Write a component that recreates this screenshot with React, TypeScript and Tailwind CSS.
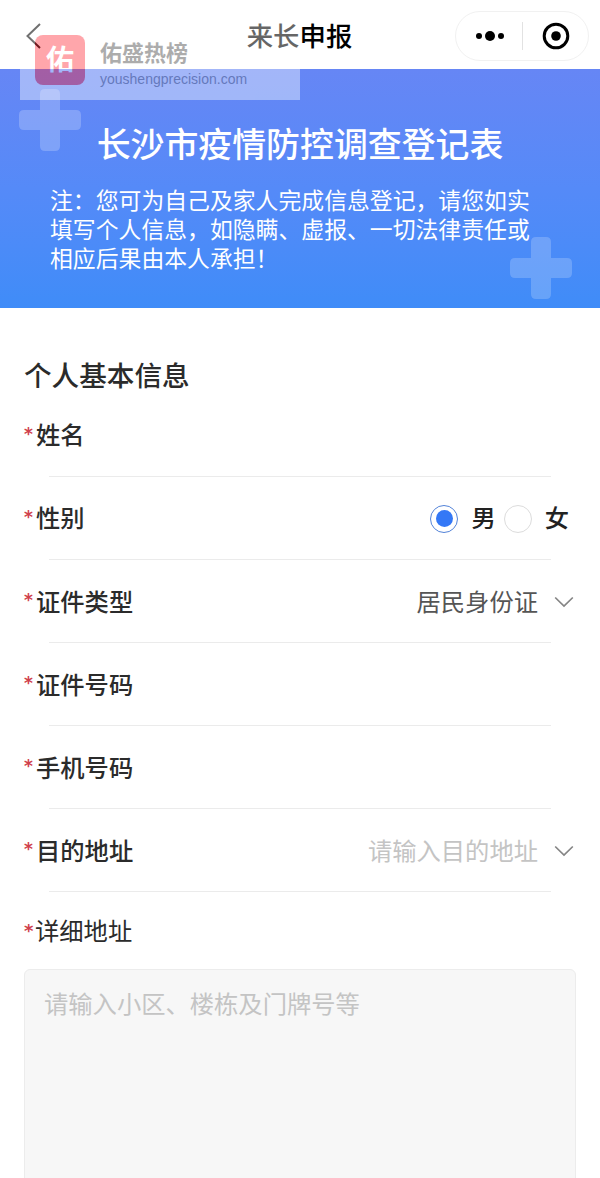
import { useState } from "react";
import type { ReactNode } from "react";

const genders = ["男", "女"];

function Plus({ className }: { className: string }) {
  return (
    <svg viewBox="0 0 62 62" className={`absolute size-[62px] ${className}`}>
      <path
        fill="currentColor"
        d="M26 0h10q5 0 5 5v16h16q5 0 5 5v10q0 5-5 5H41v16q0 5-5 5H26q-5 0-5-5V41H5q-5 0-5-5V26q0-5 5-5h16V5q0-5 5-5z"
      />
    </svg>
  );
}

function Chevron() {
  return (
    <svg viewBox="0 0 20 12" fill="none" className="mt-[3px] ml-4 h-3 w-5 text-[#858585]">
      <path d="M1.2 1.5 10 10l8.8-8.5" stroke="currentColor" strokeWidth="1.7" />
    </svg>
  );
}

interface FieldProps {
  label: string;
  children?: ReactNode;
}

function Field({ label, children }: FieldProps) {
  return (
    <div className="h-[83.1px]">
      <div className="flex h-[81px] items-center pr-[26px] pl-6">
        <span className="w-[12px] font-['DejaVu_Sans'] text-[17px] font-bold text-[#d0404c]">*</span>
        <span className="font-medium text-[#2b2b2b]">{label}</span>
        <div className="ml-auto flex items-center">{children}</div>
      </div>
      <div className="mt-px mr-[49px] ml-[49px] h-px bg-[#ebebeb]" />
    </div>
  );
}

function NavBar() {
  return (
    <header className="flex h-[69px] items-center bg-white pt-[2px]">
      <div className="w-[227px] pl-[25px]">
        <svg viewBox="0 0 17 28" fill="none" className="h-7 w-[17px]">
          <path d="M15 2 2.5 14 15 26" stroke="#111" strokeWidth="2" />
        </svg>
      </div>
      <h1 className="w-[145px] pb-px text-center text-[26.4px] font-medium text-black">来长申报</h1>
      <div className="ml-auto mr-[11px] flex h-[50px] w-[134px] items-center rounded-full border border-[#f1f1f1]">
        <div className="flex w-[66px] items-center justify-center gap-[3px] pl-[2px]">
          <span className="size-[6px] rounded-full bg-black" />
          <span className="size-[10px] rounded-full bg-black" />
          <span className="size-[6px] rounded-full bg-black" />
        </div>
        <div className="h-7 w-px bg-[#e2e2e2]" />
        <div className="flex flex-1 justify-center">
          <svg viewBox="0 0 28 28" className="size-7">
            <circle cx="14" cy="14" r="11.8" fill="none" stroke="#000" strokeWidth="3" />
            <circle cx="14" cy="14" r="4.8" />
          </svg>
        </div>
      </div>
    </header>
  );
}

function Banner() {
  return (
    <section className="relative h-[239px] bg-linear-to-b from-[#6686f5] via-[#558af8] to-[#3f8cf8] pt-[49px] text-white">
      <Plus className="top-[20px] left-[19px] text-white/22" />
      <Plus className="top-[168px] left-[510px] text-white/20" />
      <h2 className="text-center text-[33.9px] leading-[50px] font-medium">长沙市疫情防控调查登记表</h2>
      <p className="mt-[17px] ml-[50px] text-[22.85px] leading-[29.2px] whitespace-nowrap">
        注：您可为自己及家人完成信息登记，请您如实
        <br />
        填写个人信息，如隐瞒、虚报、一切法律责任或
        <br />
        相应后果由本人承担！
      </p>
    </section>
  );
}

// 左上角半透明站点标识
function SiteBadge() {
  return (
    <div className="absolute top-5 left-5 flex h-20 w-[280px] bg-white p-[15px] opacity-40">
      <div className="flex size-[50px] items-center justify-center rounded-[8px] bg-[#ff2430] pb-[4px] text-[28px] font-bold text-white">
        佑
      </div>
      <div className="ml-[15px]">
        <div className="text-[22px] leading-8 font-bold text-[#333]">佑盛热榜</div>
        <div className="mt-[3px] font-['Liberation_Sans'] text-[14px] leading-[18px] text-[#666]">
          youshengprecision.com
        </div>
      </div>
    </div>
  );
}

export default function App() {
  const [gender, setGender] = useState("男");

  return (
    <div className="relative h-[1178px] w-[600px] overflow-hidden bg-white font-['Noto_Sans_CJK_SC',sans-serif] text-[24.3px] leading-none">
      <NavBar />
      <Banner />

      <main>
        <h3 className="pt-[52px] pl-6 text-[27.6px] leading-7 font-medium text-[#2b2b2b]">个人基本信息</h3>
        <div className="mt-[6px]">
          <Field label="姓名" />
          <Field label="性别">
            {genders.map((item) => (
              <button
                key={item}
                onClick={() => setGender(item)}
                className="-mr-[3px] ml-[11px] flex items-center text-[#222]"
              >
                <span
                  className={`mt-[2px] mr-[13px] flex size-7 items-center justify-center rounded-full border ${
                    gender === item ? "border-[#5383d8]" : "border-[#dcdcdc]"
                  }`}
                >
                  {gender === item && <span className="size-[17px] rounded-full bg-[#3478f6]" />}
                </span>
                <span className="font-medium">{item}</span>
              </button>
            ))}
            <span className="w-[8px]" />
          </Field>
          <Field label="证件类型">
            <span className="text-[#555]">居民身份证</span>
            <Chevron />
          </Field>
          <Field label="证件号码" />
          <Field label="手机号码" />
          <Field label="目的地址">
            <span className="text-[#c4c4c4]">请输入目的地址</span>
            <Chevron />
          </Field>
        </div>

        <div className="flex h-[76px] items-center pl-6">
          <span className="w-[11px] font-['DejaVu_Sans'] text-[18px] font-bold text-[#d0404c]">*</span>
          <span className="text-[#2b2b2b]">详细地址</span>
        </div>
        <textarea
          placeholder="请输入小区、楼栋及门牌号等"
          className="mx-6 block h-[240px] w-[552px] resize-none rounded-md border border-[#ececec] bg-[#f7f7f7] px-[19px] py-[15px] leading-9 outline-none placeholder:text-[#c4c4c4]"
        />
      </main>

      <SiteBadge />
    </div>
  );
}
